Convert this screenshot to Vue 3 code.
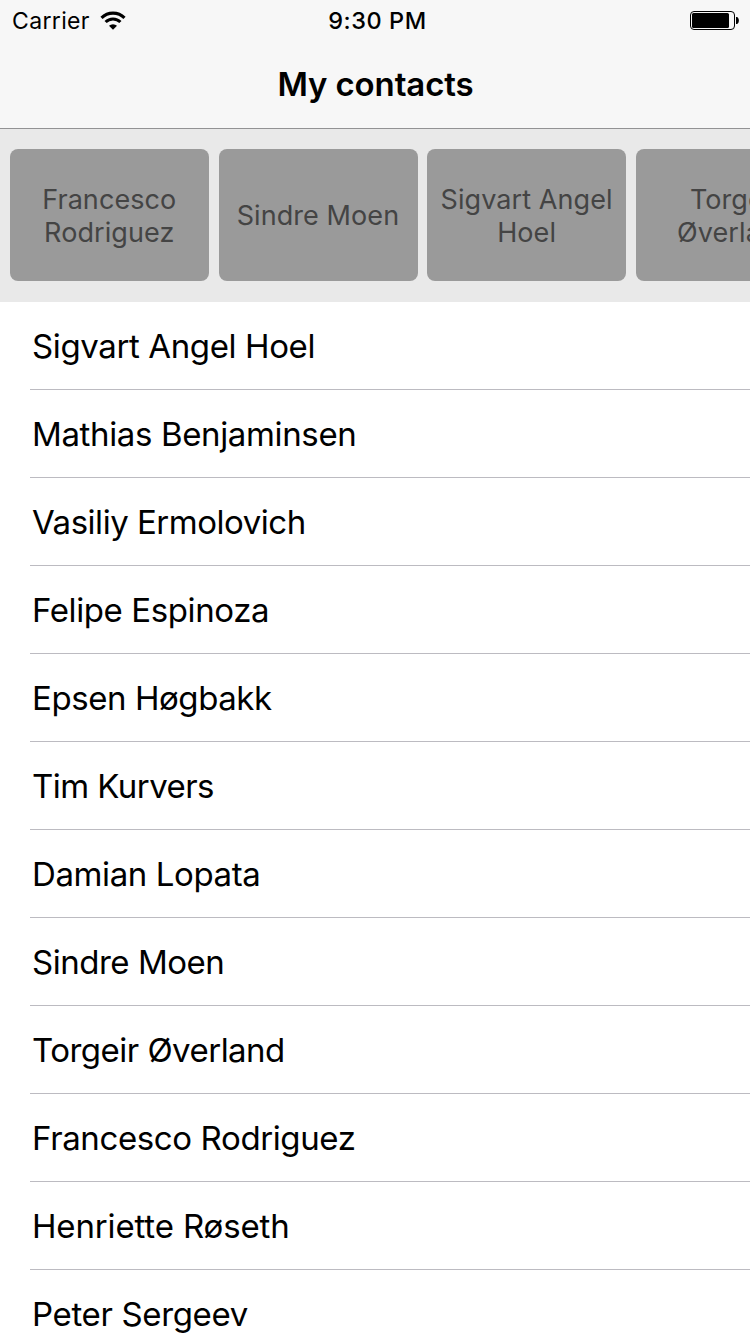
<script setup>
const cards = [
  ['Francesco', 'Rodriguez'],
  ['Sindre Moen'],
  ['Sigvart Angel', 'Hoel'],
  ['Torgeir', 'Øverland'],
]
// tracking is the letter spacing in pixels
const contacts = [
  { name: 'Sigvart Angel Hoel', tracking: -0.38 },
  { name: 'Mathias Benjaminsen', tracking: -0.36 },
  { name: 'Vasiliy Ermolovich', tracking: -0.48 },
  { name: 'Felipe Espinoza', tracking: -0.4 },
  { name: 'Epsen Høgbakk', tracking: -0.43 },
  { name: 'Tim Kurvers', tracking: -0.55 },
  { name: 'Damian Lopata', tracking: -0.4 },
  { name: 'Sindre Moen', tracking: -0.48 },
  { name: 'Torgeir Øverland', tracking: -0.52 },
  { name: 'Francesco Rodriguez', tracking: -0.38 },
  { name: 'Henriette Røseth', tracking: -0.15 },
  { name: 'Peter Sergeev', tracking: -0.35 },
]
</script>

<template>
  <main class="screen">
    <header class="top">
      <div class="status">
        <div class="carrier">
          <span>Carrier</span>
          <svg width="26" height="20" viewBox="0 0 26 20" fill="none" stroke="#000" stroke-width="3.1">
            <path d="M1.500 6.800a16.400 16.400 0 0 1 23 0" />
            <path d="M5.600 11a10.500 10.500 0 0 1 14.800 0" />
            <path d="M13 18.800L9 14.800a5.800 5.800 0 0 1 8 0z" fill="#000" stroke="none" />
          </svg>
        </div>
        <span class="time">9:30 PM</span>
        <svg class="battery" width="50" height="20" viewBox="0 0 50 20">
          <rect x=".5" y=".5" width="44" height="18" rx="3.5" fill="none" stroke="#000" />
          <rect x="2" y="2" width="37" height="15" rx="1.500" />
          <path d="M46 6h1c2.500 1 2.500 6 0 7h-1z" />
        </svg>
      </div>
      <h1>My contacts</h1>
    </header>
    <section class="strip">
      <article v-for="card in cards" :key="card[0]" class="card">
        <span v-for="line in card" :key="line">{{ line }}</span>
      </article>
    </section>
    <ul class="list">
      <li v-for="contact in contacts" :key="contact.name" :style="{ letterSpacing: contact.tracking + 'px' }">{{ contact.name }}</li>
    </ul>
  </main>
</template>

<style>
body { margin: 0; }
</style>

<style scoped>
.screen { width: 750px; height: 1334px; overflow: hidden; background: #fff; color: #000; font-family: Inter, "Liberation Sans", sans-serif; }
.top { box-sizing: border-box; height: 129px; background: #f7f7f7; border-bottom: 1px solid #929294; }
.status { height: 42px; display: grid; grid-template-columns: 1fr auto 1fr; align-items: center; font-size: 23px; padding: 0 10px 0 12px; }
.carrier { display: flex; align-items: center; gap: 10px; letter-spacing: .35px; }
.time { font-size: 23.5px; line-height: 28px; font-weight: 550; letter-spacing: .55px; padding-left: 3px; }
.battery { justify-self: end; }
h1 { margin: 0; font-size: 33px; line-height: 84px; font-weight: 600; letter-spacing: -.12px; text-align: center; padding-left: 1px; }
.strip { box-sizing: border-box; height: 173px; padding: 20px 10px; display: flex; gap: 9.7px; background: #e9e9e9; overflow: hidden; }
.card { box-sizing: border-box; flex: 0 0 199px; height: 132px; padding: 1px .5px 0 0; border-radius: 8px; background: #9a9a9a; color: #444; display: flex; flex-direction: column; align-items: center; justify-content: center; font-size: 27px; line-height: 33px; letter-spacing: .08px; white-space: nowrap; }
.list { list-style: none; margin: 0; padding: 0 0 0 30px; }
li { box-sizing: border-box; height: 88px; border-bottom: 1px solid #bcbbc1; padding-left: 2px; font-size: 33px; line-height: 89px; }
</style>
